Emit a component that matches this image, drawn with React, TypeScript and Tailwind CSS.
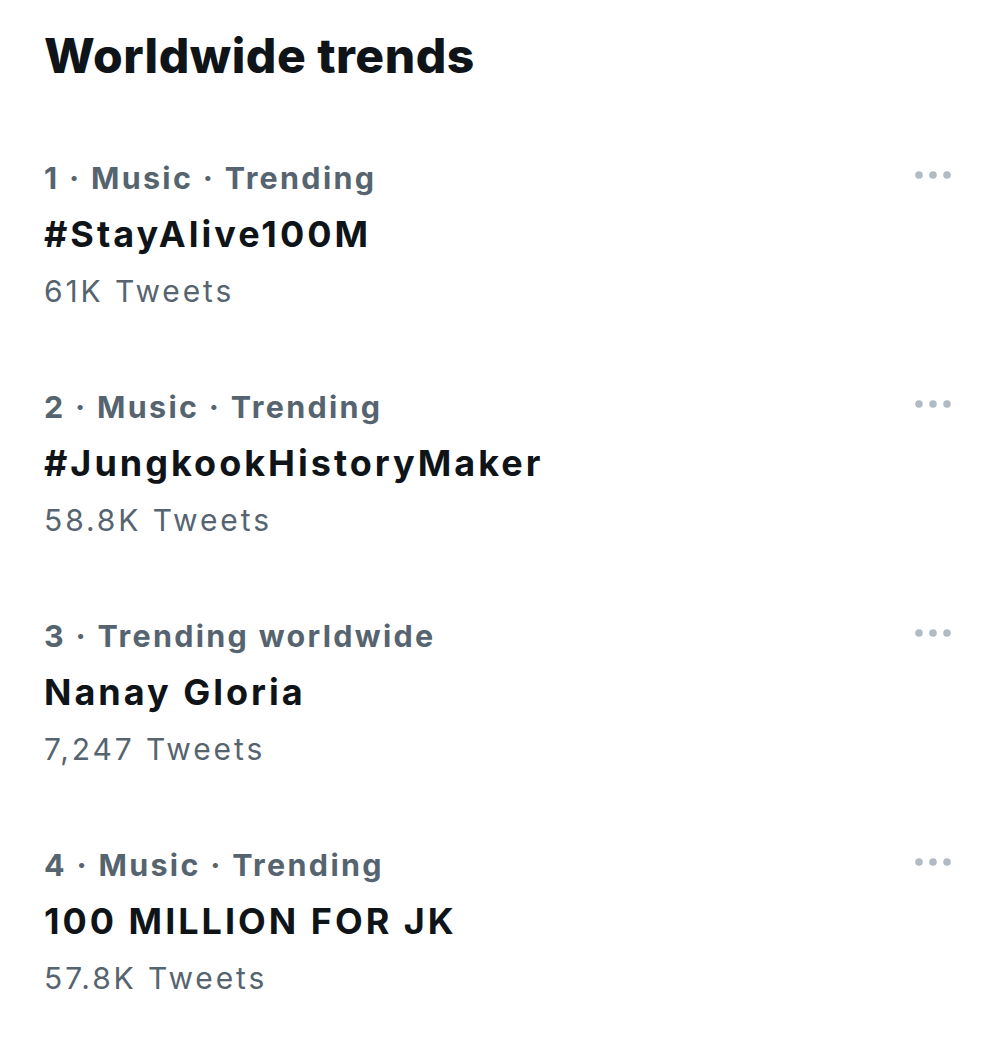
import React from "react";

const trends = [
  { meta: "1 · Music · Trending", title: "#StayAlive100M", count: "61K Tweets" },
  { meta: "2 · Music · Trending", title: "#JungkookHistoryMaker", count: "58.8K Tweets" },
  { meta: "3 · Trending worldwide", title: "Nanay Gloria", count: "7,247 Tweets" },
  { meta: "4 · Music · Trending", title: "100 MILLION FOR JK", count: "57.8K Tweets" },
];

function Dots() {
  return (
    <svg width="38" height="10" viewBox="0 0 38 10" className="mt-[21px]">
      <circle cx="5" cy="5" r="3.8" fill="#b1bbc3" />
      <circle cx="19" cy="5" r="3.8" fill="#b1bbc3" />
      <circle cx="33" cy="5" r="3.8" fill="#b1bbc3" />
    </svg>
  );
}

export default function App() {
  return (
    <div className="w-[1000px] h-[1042px] bg-white font-['Inter',sans-serif] pl-[44px] pr-[48px] pt-[26px]">
      <h1 className="text-[48px] leading-[60px] font-extrabold text-[#0f1419] tracking-[0.5px]">
        Worldwide trends
      </h1>
      <div className="mt-[63px] flex flex-col gap-[58px]">
        {trends.map((t) => (
          <div key={t.title} className="flex justify-between">
            <div className="flex flex-col">
              <div className="text-[30.5px] leading-[57px] font-bold text-[#566470] tracking-[2.3px]">{t.meta}</div>
              <div className="text-[36px] leading-[57px] font-bold text-[#0f1419] tracking-[3px]">{t.title}</div>
              <div className="text-[30px] leading-[57px] text-[#566470] tracking-[2.9px]">{t.count}</div>
            </div>
            <Dots />
          </div>
        ))}
      </div>
    </div>
  );
}
